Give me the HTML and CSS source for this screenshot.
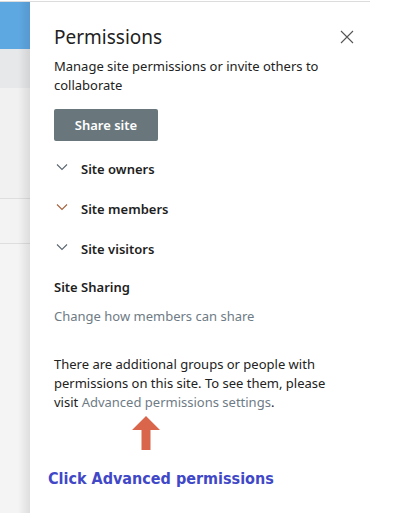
FILE: index.html
```html
<!DOCTYPE html>
<html>
<head>
<meta charset="utf-8">
<link rel="stylesheet" href="styles.css">
</head>
<body>
<div class="topline"></div>
<div class="page">
  <div class="backdrop">
    <div class="bd-blue"></div>
    <div class="bd-gray"></div>
    <div class="bd-row"></div>
    <div class="bd-row2"></div>
    <div class="bd-rest"></div>
  </div>
  <div class="panel">
    <div class="header">
      <h1 class="title">Permissions</h1>
      <svg class="close" width="14" height="14" viewBox="0 0 14 14"><path d="M1 1 L13 13 M13 1 L1 13" stroke="#555" stroke-width="1.1" fill="none"/></svg>
    </div>
    <p class="desc">Manage site permissions or invite others to collaborate</p>
    <button class="share">Share site</button>
    <ul class="groups">
      <li class="group"><svg class="chev" width="12" height="8" viewBox="0 0 12 8"><path d="M1 1.5 L6 6.5 L11 1.5" stroke="#5b6670" stroke-width="1.1" fill="none"/></svg><span>Site owners</span></li>
      <li class="group"><svg class="chev" width="12" height="8" viewBox="0 0 12 8"><path d="M1 1.5 L6 6.5 L11 1.5" stroke="#a4623c" stroke-width="1.1" fill="none"/></svg><span>Site members</span></li>
      <li class="group"><svg class="chev" width="12" height="8" viewBox="0 0 12 8"><path d="M1 1.5 L6 6.5 L11 1.5" stroke="#5b6670" stroke-width="1.1" fill="none"/></svg><span>Site visitors</span></li>
    </ul>
    <h2 class="sharing">Site Sharing</h2>
    <a class="link change">Change how members can share</a>
    <p class="note">There are additional groups or people with permissions on this site. To see them, please visit <a class="link">Advanced permissions settings</a>.</p>
    <div class="arrow-wrap">
      <svg class="arrow" width="28" height="34" viewBox="0 0 28 34"><path d="M14 0 L28 14 L18.5 14 L18.5 34 L9.5 34 L9.5 14 L0 14 Z" fill="#d9664a"/></svg>
    </div>
    <div class="callout">Click Advanced permissions</div>
  </div>
</div>
</body>
</html>
```
FILE: styles.css
```css
html, body {
  margin: 0;
  padding: 0;
  background: #fff;
}
body {
  width: 393px;
  height: 513px;
  overflow: hidden;
  position: relative;
  font-family: "Noto Sans", "Open Sans", sans-serif;
  color: #222;
}
.topline {
  position: absolute;
  top: 1px;
  left: 0;
  width: 370px;
  height: 1px;
  background: #dcdcdc;
  z-index: 2;
}
.page {
  display: flex;
  height: 513px;
  padding-top: 2px;
  box-sizing: border-box;
}
.backdrop {
  width: 30px;
  flex: none;
  display: flex;
  flex-direction: column;
  position: relative;
}
.backdrop::after {
  content: "";
  position: absolute;
  top: 0; right: 0; bottom: 0;
  width: 12px;
  background: linear-gradient(to right, rgba(0,0,0,0), rgba(0,0,0,0.09));
}
.bd-blue {
  height: 47px;
  background: #5ea8e2;
}
.bd-gray {
  height: 39px;
  background: #e6e8e9;
}
.bd-row {
  height: 110px;
  background: #f1f1f1;
  border-bottom: 1px solid #dedede;
}
.bd-row2 {
  height: 44px;
  background: #f3f3f3;
  border-bottom: 1px solid #dedede;
}
.bd-rest {
  flex: 1;
  background: #f4f4f4;
}
.panel {
  flex: 1;
  background: #fff;
  padding-left: 24px;
  padding-right: 49px;
}
.header {
  display: flex;
  justify-content: space-between;
  align-items: flex-start;
  margin-top: 21px;
}
.title {
  margin: 0;
  font-size: 19px;
  font-weight: 400;
  line-height: 28px;
  color: #222;
}
.close {
  margin-top: 7px;
  margin-right: -10px;
}
.desc {
  margin: 6px 0 0;
  font-size: 13px;
  line-height: 19px;
  color: #222;
}
.share {
  display: block;
  margin-top: 14px;
  width: 104px;
  height: 32px;
  border: none;
  border-radius: 2px;
  background: #69777c;
  color: #fff;
  font-family: inherit;
  font-size: 13px;
  font-weight: 600;
  padding: 0;
}
.groups {
  list-style: none;
  margin: 8px 0 0;
  padding: 0;
}
.group {
  display: flex;
  align-items: center;
  height: 40px;
  font-size: 13px;
  font-weight: 600;
  color: #1e1e1e;
}
.chev {
  margin-left: 2px;
  margin-right: 13px;
  margin-top: -4px;
}
.sharing {
  margin: 8px 0 0;
  font-size: 13px;
  font-weight: 600;
  line-height: 20px;
  color: #1e1e1e;
}
.link {
  color: #6e7b85;
  text-decoration: none;
}
.change {
  display: block;
  margin-top: 9px;
  font-size: 13px;
  line-height: 20px;
}
.note {
  margin: 29px 0 0;
  font-size: 13px;
  line-height: 19px;
  color: #222;
}
.arrow-wrap {
  display: flex;
  margin-top: 4px;
  padding-left: 78px;
}
.callout {
  margin: 19px 0 0 -6px;
  font-family: "DejaVu Sans Condensed", "DejaVu Sans", sans-serif;
  font-stretch: condensed;
  font-weight: bold;
  font-size: 16px;
  color: #4148c8;
}
```
